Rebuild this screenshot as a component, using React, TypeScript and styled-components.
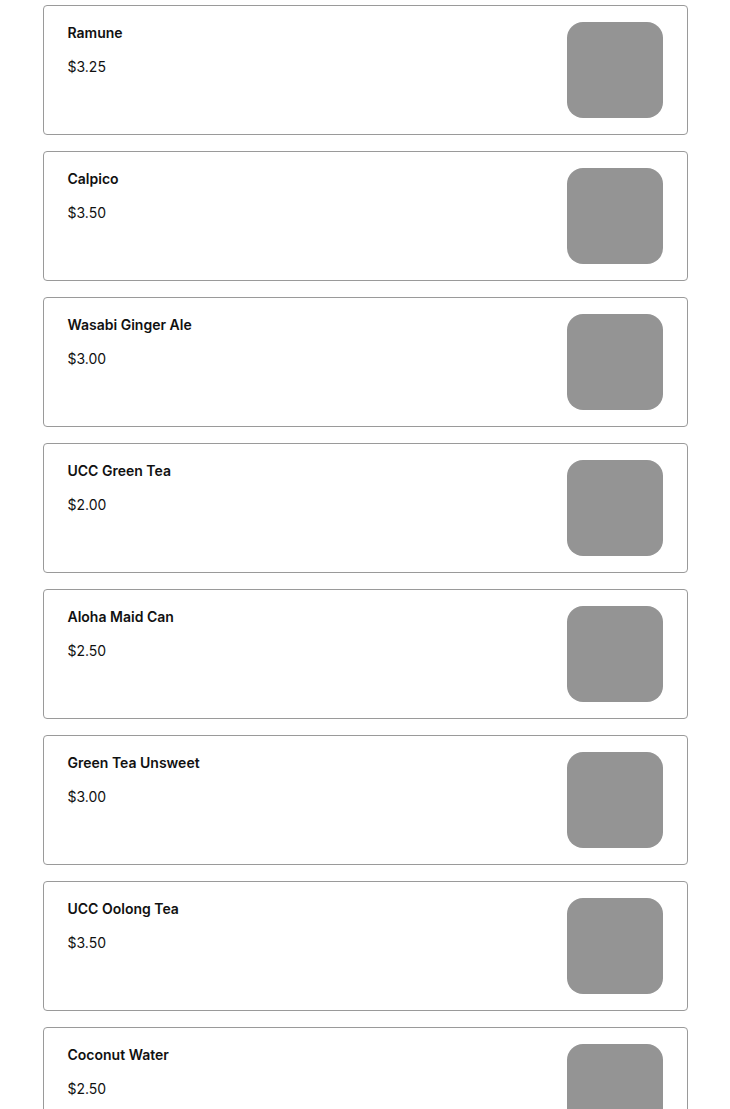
import * as React from 'react';
import styled, { createGlobalStyle } from 'styled-components';

interface Drink {
    name: string;
    price: string;
}

const drinks: Drink[] = [
    { name: 'Ramune', price: '$3.25' },
    { name: 'Calpico', price: '$3.50' },
    { name: 'Wasabi Ginger Ale', price: '$3.00' },
    { name: 'UCC Green Tea', price: '$2.00' },
    { name: 'Aloha Maid Can', price: '$2.50' },
    { name: 'Green Tea Unsweet', price: '$3.00' },
    { name: 'UCC Oolong Tea', price: '$3.50' },
    { name: 'Coconut Water', price: '$2.50' },
];

const GlobalStyle = createGlobalStyle`
    html, body {
        margin: 0;
        padding: 0;
        background: #fff;
        font-family: Inter, "Noto Sans", sans-serif;
        color: #111;
    }
`;

export default function App() {
    return (
        <>
            <GlobalStyle />
            <MenuList>
                {drinks.map((drink) => (
                    <ItemCard key={drink.name}>
                        <Info>
                            <ItemName>{drink.name}</ItemName>
                            <ItemPrice>{drink.price}</ItemPrice>
                        </Info>
                        <Thumb />
                    </ItemCard>
                ))}
            </MenuList>
        </>
    );
}

const MenuList = styled.div`
    display: flex;
    flex-direction: column;
    gap: 16px;
    width: 645px;
    margin: 0 auto;
    padding-top: 5px;
`;

const ItemCard = styled.div`
    display: flex;
    justify-content: space-between;
    align-items: flex-start;
    box-sizing: border-box;
    height: 130px;
    padding: 16px 24px;
    border: 1px solid #9a9a9a;
    border-radius: 4px;
    background: #fff;
`;

const Info = styled.div`
    display: flex;
    flex-direction: column;
    gap: 12px;
`;

const ItemName = styled.h3`
    margin: 0;
    font-size: 14px;
    font-weight: 600;
    line-height: 22px;
    color: #111;
`;

const ItemPrice = styled.p`
    margin: 0;
    font-size: 14px;
    font-weight: 400;
    line-height: 22px;
    color: #111;
`;

const Thumb = styled.div`
    flex: none;
    width: 96px;
    height: 96px;
    border-radius: 16px;
    background: #949494;
`;
